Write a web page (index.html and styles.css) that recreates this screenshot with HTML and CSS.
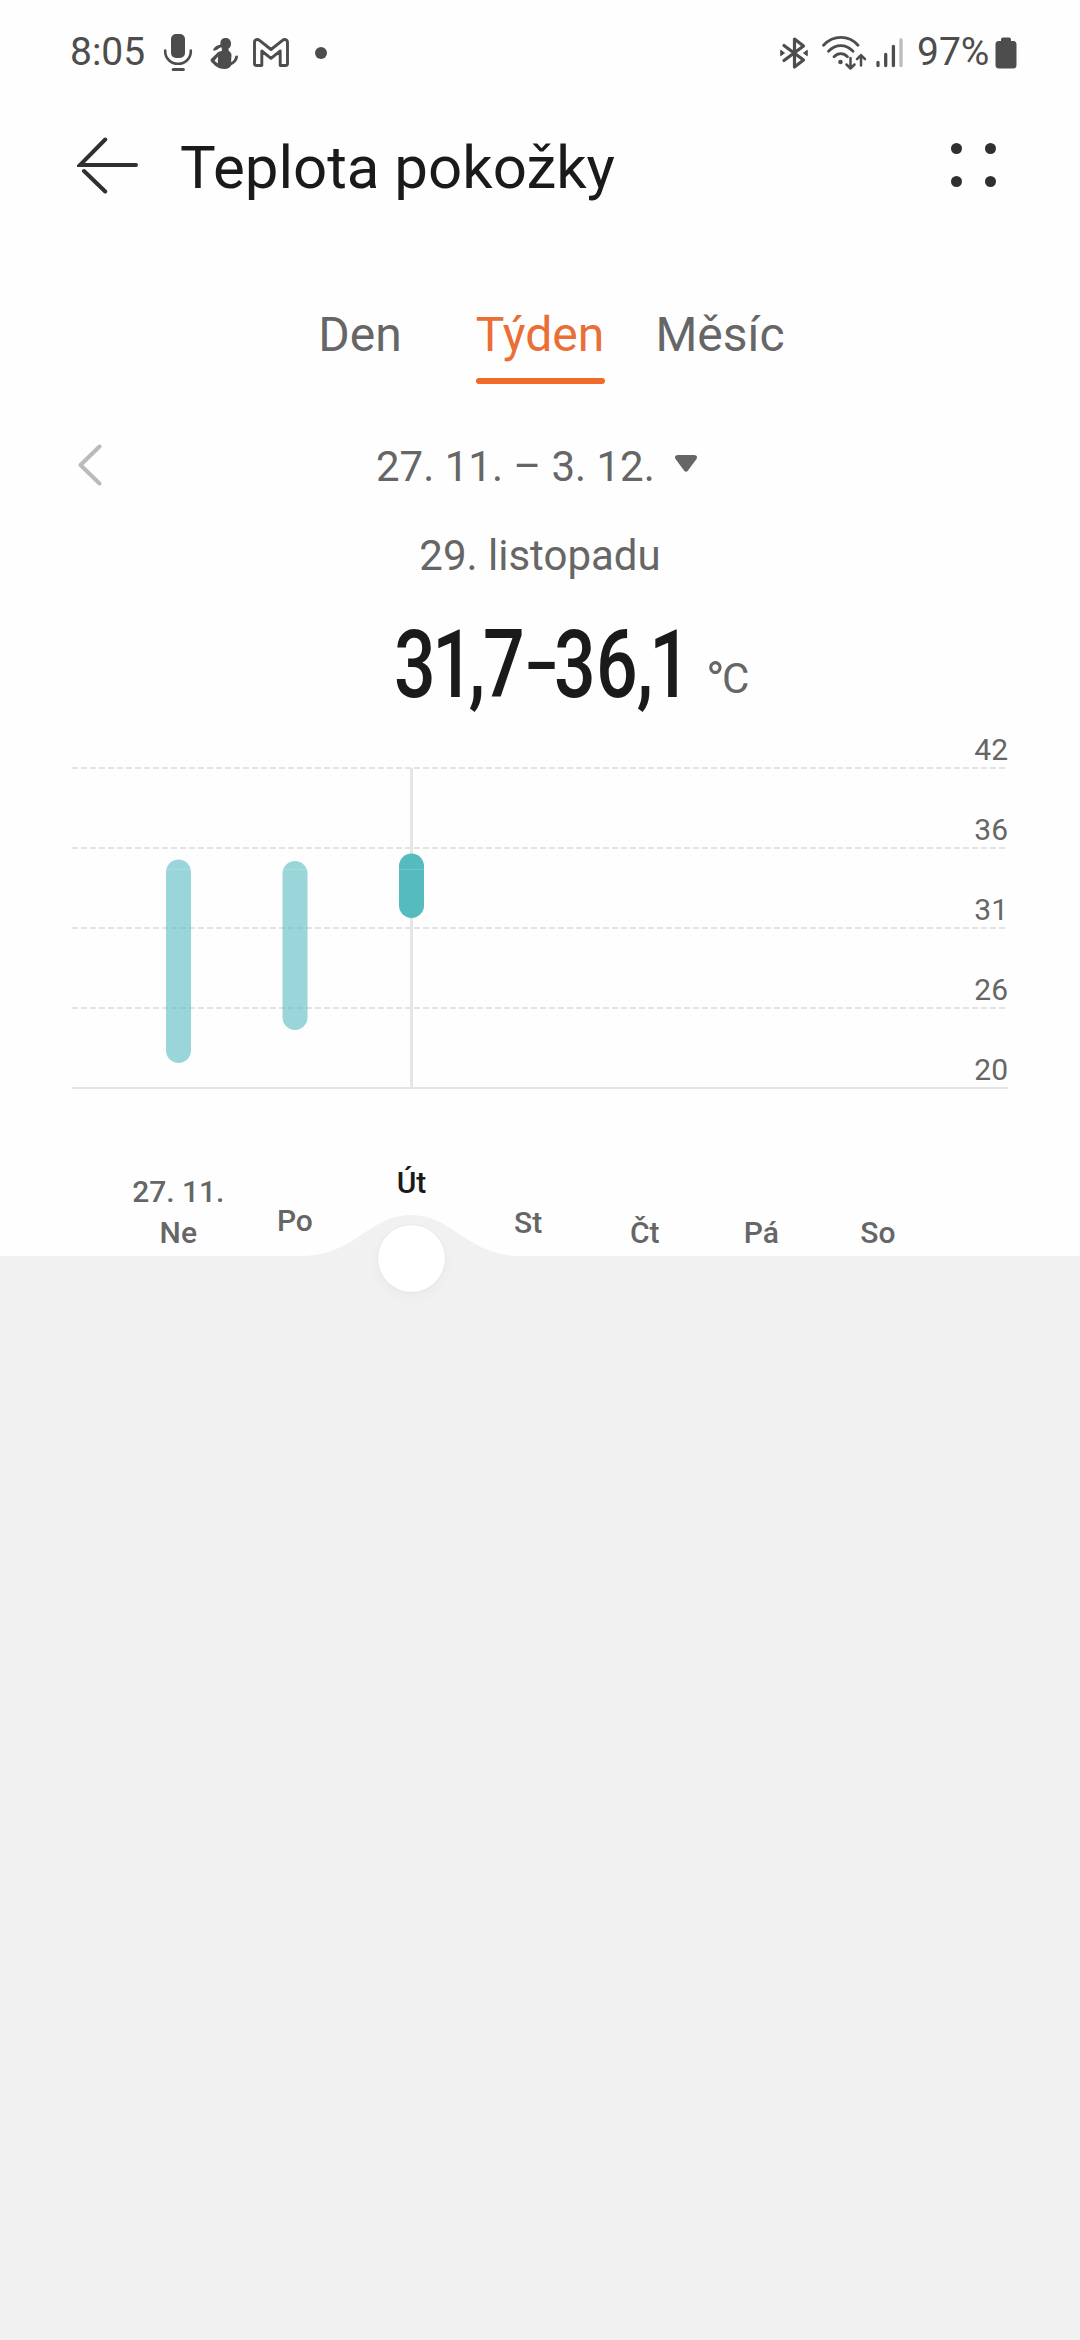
FILE: index.html
```html
<!DOCTYPE html>
<html lang="cs">
<head>
<meta charset="utf-8">
<title>Teplota pokožky</title>
<link rel="stylesheet" href="styles.css">
</head>
<body>
<div class="status">
  <div class="status-left">
    <span class="clock">8:05</span>
    <svg class="ic-mic" width="30" height="40" viewBox="0 0 30 40" fill="none" stroke="#4d4d4d" stroke-linecap="round"><rect x="8" y="1" width="14" height="24" rx="5" fill="#4d4d4d" stroke="none"/><path d="M2.200 17.500v1a12.800 12.300 0 0 0 25.600 0v-1" stroke-width="2.600"/><path d="M10.200 36.500h10.200" stroke-width="3"/></svg>
    <svg class="ic-person" width="28" height="32" viewBox="0 0 28 32" fill="#4d4d4d"><path d="M10.500 4.500C11.500 1.500 14 .5 16.500 1c3 .5 4.800 3 4.500 6-.2 3-1.500 4-2.500 4.500l.3 2.500c1.700.8 2.700 2.200 2.700 4.500l-.5 6.500c2.500-1 3.500-2.500 4.200-5.500.5-1.500 2.800-1.500 2.800.2-.5 4.500-3.500 6.800-6.500 8.300-1.500 2.800-3.500 4-7 4-6 0-10-3.500-13.500-7.500-.8-1-.6-2 .2-2.800l6.500-6.200c1.500-1 3-1.300 4.300-1.700l-.5-3.600c-3 .5-3.800 3.600-8.500 3.300 1-3 3-5.300 7.300-5.700z"/><path d="M8 19.500l-3.500 4.200 3.300 2.800z" fill="#fff"/></svg>
    <svg class="ic-gmail" width="36" height="29" viewBox="0 0 36 29" fill="none" stroke="#4d4d4d" stroke-width="2.900" stroke-linejoin="round"><path d="M1.500 4.500C1.500 1.500 4.500.8 6.500 2.300L18 11.500 29.500 2.300c2-1.500 5-.8 5 2.200V25.500q0 2-2 2h-5.300V13L18 20.300 8.800 13v14.500H3.500q-2 0-2-2z"/></svg>
    <span class="more-dot"></span>
  </div>
  <div class="status-right">
    <svg class="ic-bt" width="28" height="34" viewBox="0 0 28 34" fill="none" stroke="#4d4d4d" stroke-width="3.200" stroke-linecap="round" stroke-linejoin="round"><path d="M4 9.500L23.500 24 14.500 31V3L23.500 10 4 24.500"/><path d="M1 14.500l3.500 2.500L1 19.500zM27 14.500L23.500 17l3.500 2.500z" fill="#4d4d4d" stroke-width="1"/></svg>
    <svg class="ic-wifi" width="46" height="36" viewBox="0 0 46 36" fill="none" stroke="#4d4d4d" stroke-width="2.800" stroke-linecap="round" stroke-linejoin="round"><path d="M2.500 10.200C12.500-.2 27.500-.2 37 10.200M7.500 16.200c7.500-7.400 17-7.400 24.500 0M13 21.700c4-4 9.500-4 13.500 0"/><circle cx="19.500" cy="27" r="2.300" fill="#4d4d4d" stroke="none"/><path d="M29.500 23v10M25.500 29.500l4 4 4-4M40 30.500V20.500M36 24.200l4-4 4 4" stroke-width="2.500"/></svg>
    <svg class="ic-signal" width="28" height="32" viewBox="0 0 28 32" stroke="#4d4d4d" stroke-width="3.300" stroke-linecap="round"><path d="M2 25.500v3M9.700 17.500v11M17.400 9.500v19"/><path d="M25 3v25.500" stroke="#bcbcbc"/></svg>
    <span class="percent">97%</span>
    <svg class="ic-battery" width="22" height="32" viewBox="0 0 22 32" fill="#4d4d4d"><path d="M6 4V2.500Q6 .5 8 .5h6q2 0 2 2V4h2.500Q21.500 4 21.500 7.500V28q0 3.500-3.500 3.500H4Q.5 31.500.5 28V7.500Q.5 4 3.500 4z"/></svg>
  </div>
</div>

<header class="header">
  <svg class="back" width="62" height="58" viewBox="0 0 62 58" fill="none" stroke="#303030" stroke-width="4" stroke-linecap="round"><path d="M59 29H3L28.200 3.500M7 35L28.200 55.500"/></svg>
  <h1 class="title">Teplota pokožky</h1>
  <div class="menu"><i></i><i></i><i></i><i></i></div>
</header>

<nav class="tabs">
  <a class="tab">Den</a>
  <a class="tab tab-active">Týden</a>
  <a class="tab">Měsíc</a>
</nav>

<div class="range">
  <svg class="prev" width="24" height="42" viewBox="0 0 24 42" fill="none" stroke="#bababa" stroke-width="4" stroke-linecap="round" stroke-linejoin="round"><path d="M21.500 2.500L2.500 21l19 18.500"/></svg>
  <span class="range-text">27. 11. – 3. 12.</span>
  <svg class="caret" width="22" height="17" viewBox="0 0 22 17" fill="#666"><path d="M3 0h16q4.500.5 2.300 4.200L13 15.500q-2 2.500-4 0L.7 4.200Q-1.500.5 3 0z"/></svg>
</div>

<div class="day">29. listopadu</div>

<div class="value">
  <svg class="reading" width="300" height="126" viewBox="0 0 300 126">
    <text class="digits" transform="translate(0 97) scale(.78 1)" x="0 49 96 114">31,7</text>
    <text class="digits" transform="translate(130.500 89) scale(1.080 .8)">-</text>
    <text class="digits" transform="translate(160 97) scale(.78 1)" x="0 54 106 122">36,1</text>
  </svg>
  <span class="unit"><span class="degree">°</span>C</span>
</div>

<section class="chart">
  <div class="line first">42</div>
  <div class="line">36</div>
  <div class="line">31</div>
  <div class="line">26</div>
  <div class="line base">20</div>
  <svg class="plot" width="1080" height="360" viewBox="0 0 1080 360">
    <rect x="410" y="39" width="3" height="320" fill="#e5e5e5"/>
    <g fill="#56bbbf">
      <rect x="166" y="130.500" width="25" height="203.500" rx="12.500" opacity=".6"/>
      <rect x="282.500" y="132" width="25" height="169" rx="12.500" opacity=".6"/>
      <rect x="399" y="124.500" width="25" height="64.500" rx="12.500"/>
    </g>
    <path d="M166 140.500h25M282.500 140.500h25M399 140.500h25" stroke="#fff" stroke-opacity=".15"/>
  </svg>
</section>

<section class="days">
  <div class="d">27. 11.<br>Ne</div>
  <div class="d d-near1">Po</div>
  <div class="d d-selected">Út</div>
  <div class="d d-near2">St</div>
  <div class="d">Čt</div>
  <div class="d">Pá</div>
  <div class="d">So</div>
  <svg class="bump" width="220" height="41" viewBox="0 0 220 41"><path d="M0 41C54 41 68 0 110 0s56 41 110 41z" fill="#f1f1f1"/></svg>
  <span class="knob"></span>
</section>
<main class="details"></main>
</body>
</html>
```
FILE: styles.css
```css
* { box-sizing: border-box; }
body {
  margin: 0;
  width: 1080px;
  height: 2340px;
  display: flex;
  flex-direction: column;
  overflow: hidden;
  background: #fefefe;
  color: #666;
  font-family: Roboto, "Noto Sans", sans-serif;
}
svg { display: block; flex: none; }

.status {
  height: 105px;
  display: flex;
  justify-content: space-between;
  padding: 0 63px 0 70px;
  color: #4d4d4d;
  font-size: 39px;
  line-height: 105px;
}
.status-left, .status-right { display: flex; align-items: center; }
.clock { width: 93px; }
.ic-mic { margin-right: 17px; }
.ic-person { margin-right: 15px; }
.ic-gmail { margin-right: 26px; }
.more-dot { width: 12px; height: 12px; border-radius: 50%; background: #4d4d4d; }
.ic-bt { margin-right: 13px; }
.ic-wifi { margin-right: 9px; }
.ic-signal { margin-right: 13px; }
.percent { width: 78px; }

.header {
  height: 120px;
  display: flex;
  align-items: center;
  padding: 0 84px 0 77px;
}
.title {
  flex: 1;
  margin: 0;
  padding: 5px 0 0 41px;
  font-size: 60px;
  font-weight: 400;
  line-height: 70px;
  color: #1a1a1a;
}
.menu { display: grid; grid-template-columns: 11px 11px; gap: 22px 23.500px; }
.menu i { width: 11px; height: 11px; border-radius: 50%; background: #303030; }

.tabs {
  height: 195px;
  display: flex;
  justify-content: center;
  padding-top: 80px;
  font-size: 48px;
  line-height: 60px;
}
.tab { width: 180px; display: flex; flex-direction: column; align-items: center; }
.tab-active { color: #e96f36; }
.tab-active::after {
  content: "";
  width: 129px;
  height: 6px;
  margin-top: 13px;
  border-radius: 3px;
  background: #f26a29;
}

.range {
  height: 90px;
  display: flex;
  align-items: center;
  padding-left: 78px;
  font-size: 42px;
  line-height: 50px;
}
.range-text { width: 299px; margin-left: 274px; padding-top: 4px; white-space: nowrap; }
.caret { margin-bottom: 4px; }

.day {
  height: 90px;
  text-align: center;
  font-size: 42px;
  line-height: 91px;
}

.value { height: 120px; display: flex; padding-left: 394px; }
.digits { font-size: 94px; font-weight: 500; fill: #1a1a1a; }
.unit { display: flex; margin-left: 12px; font-size: 42px; line-height: 157px; }
.degree { width: 16px; font-size: 50px; line-height: 163px; }

.chart { position: relative; padding: 9px 72px 0; }
.line {
  height: 80px;
  padding: 44px 0 0;
  text-align: right;
  font-size: 30px;
  line-height: 34px;
  background: repeating-linear-gradient(90deg, #e3e3e3 0 6px, transparent 6px 9px) left bottom / 935px 2px no-repeat;
}
.first { height: 40px; padding-top: 4px; }
.base { background: linear-gradient(#e3e3e3, #e3e3e3) left bottom / 100% 2px no-repeat; }
.plot { position: absolute; left: 0; top: 9px; }

.days {
  position: relative;
  height: 167px;
  display: flex;
  align-items: flex-end;
  padding: 0 0 3px 120px;
  font-size: 30px;
  font-weight: 500;
  line-height: 41px;
  text-align: center;
}
.d { width: 116.600px; }
.d-near1 { padding-bottom: 12px; }
.d-near2 { padding-bottom: 10px; }
.d-selected { padding-bottom: 50px; color: #1a1a1a; }
.bump { position: absolute; left: 301px; bottom: 0; }
.knob {
  position: absolute;
  left: 378px;
  bottom: -36px;
  width: 67px;
  height: 67px;
  border-radius: 50%;
  background: #fff;
  box-shadow: 0 0 2px rgba(0, 0, 0, .08), 0 5px 14px rgba(0, 0, 0, .03);
}
.details { flex: 1; background: #f1f1f1; }
```
